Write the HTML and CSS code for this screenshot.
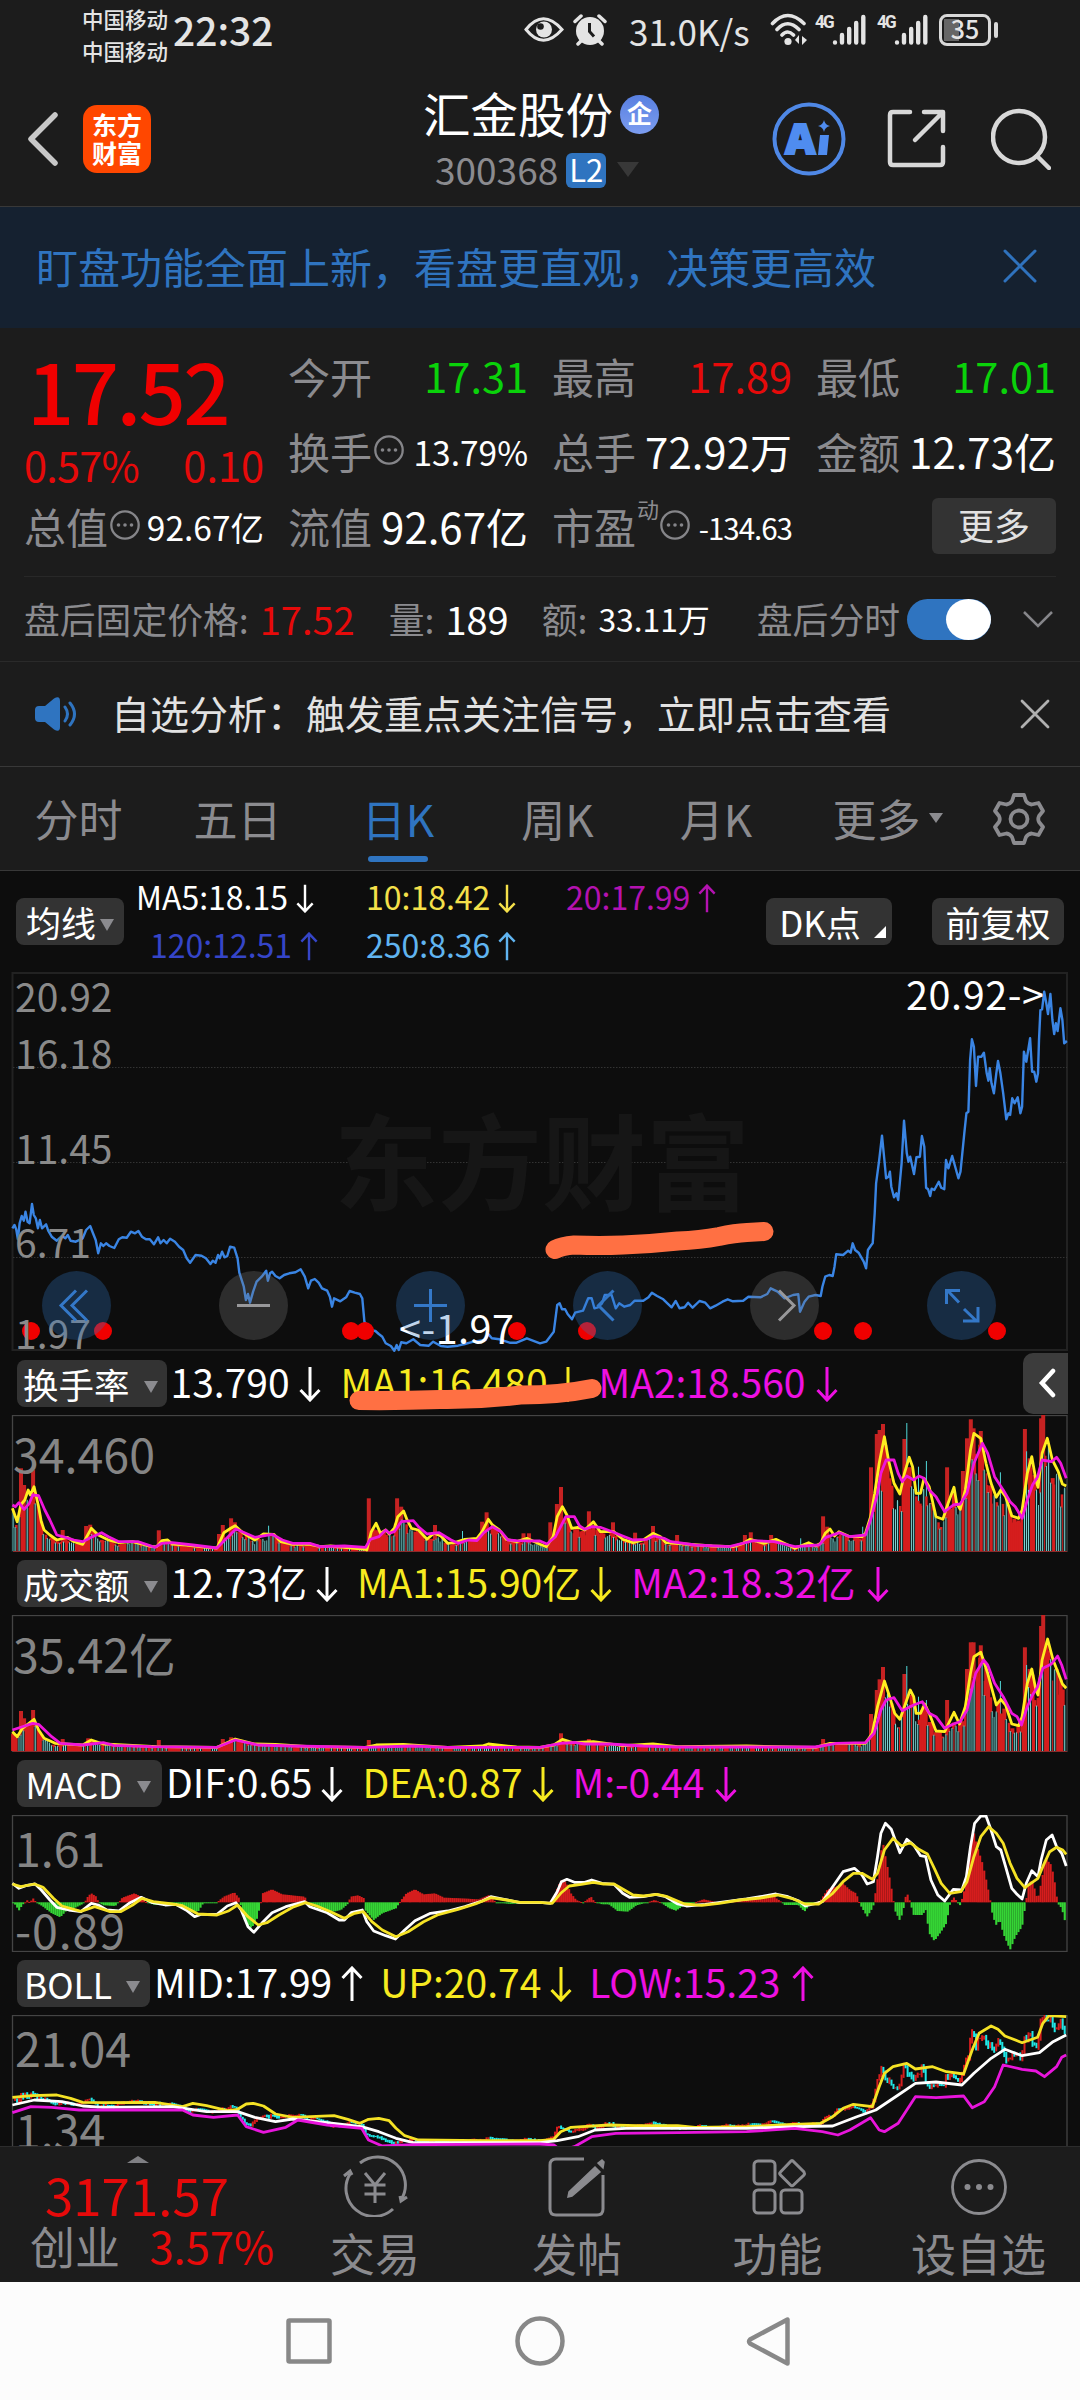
FILE: index.html
```html
<!DOCTYPE html>
<html lang="zh-CN">
<head>
  <meta charset="UTF-8" />
  <title>汇金股份 300368</title>
  <meta name="viewport" content="width=device-width, initial-scale=1.0" />
  <link rel="stylesheet" href="styles.css">
</head>
<body>

<svg width="0" height="0" class="defs">
  <symbol id="down" viewBox="0 0 22 36"><path d="M11 1v32M1.500 24l9.500 10 9.500-10" /></symbol>
  <symbol id="up" viewBox="0 0 22 36"><path d="M11 35V3M1.500 12L11 2l9.500 10" /></symbol>
  <symbol id="info" viewBox="0 0 30 30"><circle cx="15" cy="15" r="13.700" fill="none" stroke="#858589" stroke-width="2.300" /><g fill="#858589"><circle cx="8.500" cy="15" r="1.800" /><circle cx="15" cy="15" r="1.800" /><circle cx="21.500" cy="15" r="1.800" /></g></symbol>
  <symbol id="bars" viewBox="0 0 34 32"><g stroke="#e4e4e4" stroke-width="4.400" stroke-linecap="round"><path d="M3 28.500v.1M10 21v7.500M17.200 15v13.500M24.200 9v19.500M31.300 3v25.500" /></g></symbol>
</svg>

<div class="status">
  <div class="carrier"><span>中国移动</span><span>中国移动</span></div>
  <div class="time">22:32</div>
  <svg class="eye" width="40" height="27" viewBox="0 0 40 27"><path d="M2 13.500Q19 -8 38 13.500Q19 35 2 13.500Z" fill="none" stroke="#e4e4e4" stroke-width="3" /><circle cx="20" cy="13.500" r="8" fill="#e4e4e4" /><circle cx="16.500" cy="10.500" r="3.300" fill="#1c1c1c" /></svg>
  <svg class="alarm" width="34" height="32" viewBox="0 0 34 32"><circle cx="17" cy="17" r="14" fill="#e4e4e4" /><path d="M2 7.500l6-5.500M32 7.500l-6-5.500M5 30l4-4M29 30l-4-4" stroke="#e4e4e4" stroke-width="3.500" stroke-linecap="round" /><path d="M16.500 9v8.500l4.500 5" fill="none" stroke="#1c1c1c" stroke-width="3" /></svg>
  <div class="speed">31.0K/s</div>
  <svg class="wifi" width="38" height="33" viewBox="0 0 38 33"><g fill="none" stroke="#e4e4e4" stroke-width="3.600" stroke-linecap="round"><path d="M2.500 10.500Q17.500 -5.500 34 10.500M7 16.500Q17.500 5 29 16.500M12 22Q17.500 16 23.500 22" /></g><circle cx="18" cy="28.500" r="3.600" fill="#e4e4e4" /><path d="M29 22v9l-4-4zM32 32v-9l5 4z" fill="#e4e4e4" /></svg>
  <div class="net">4G</div><svg class="sig" width="34" height="32"><use href="#bars" /></svg>
  <div class="net second">4G</div><svg class="sig" width="34" height="32"><use href="#bars" /></svg>
  <div class="battery"><span>35</span></div><i class="nub"></i>
</div>

<header class="header">
  <svg class="back" width="32" height="56" viewBox="0 0 32 56"><path d="M28 4L4 28l24 24" fill="none" stroke="#c8c8c8" stroke-width="5.500" stroke-linecap="round" stroke-linejoin="round" /></svg>
  <div class="logo"><span>东方</span><span>财富</span></div>
  <div class="title">
    <div class="name">汇金股份<span class="corp">企</span></div>
    <div class="code">300368<span class="l2">L2</span><i class="tri-big"></i></div>
  </div>
  <svg class="ai" width="74" height="74" viewBox="0 0 74 74"><circle cx="37" cy="37" r="34.500" fill="none" stroke="#4f88e6" stroke-width="4" /><text x="13" y="52" class="ai-text">A</text><path d="M48 33h9l-2 20h-9zM52 18q1 5 6 6q-5 1-6 6q-1-5-6-6q5-1 6-6z" fill="#4f8cf0" /></svg>
  <svg class="share" width="60" height="60" viewBox="0 0 60 60"><path d="M23 3H6Q3 3 3 6V53Q3 56 6 56H53Q56 56 56 53V38M37 3H56V22M55 4L28 31" fill="none" stroke="#d8d8d8" stroke-width="4.500" stroke-linecap="round" stroke-linejoin="round" /></svg>
  <svg class="search" width="60" height="62" viewBox="0 0 60 62"><circle cx="28" cy="29" r="26" fill="none" stroke="#d8d8d8" stroke-width="4.500" /><path d="M46 48l12 12" stroke="#d8d8d8" stroke-width="4.500" stroke-linecap="round" /></svg>
</header>

<div class="banner">
  <span>盯盘功能全面上新，看盘更直观，决策更高效</span>
  <svg width="34" height="34" viewBox="0 0 34 34"><path d="M2 2l30 30M32 2L2 32" stroke="#2f72bd" stroke-width="3" stroke-linecap="round" /></svg>
</div>

<section class="quote">
  <div class="col first">
    <div class="price">17.52</div>
    <div class="change red"><span>0.57%</span><span>0.10</span></div>
    <div class="row"><label>总值</label><svg class="info"><use href="#info" /></svg><b class="s34">92.67亿</b></div>
  </div>
  <div class="col">
    <div class="row"><label>今开</label><b class="green">17.31</b></div>
    <div class="row"><label>换手</label><svg class="info"><use href="#info" /></svg><b class="s34">13.79%</b></div>
    <div class="row"><label>流值</label><b>92.67亿</b></div>
  </div>
  <div class="col">
    <div class="row"><label>最高</label><b class="red">17.89</b></div>
    <div class="row"><label>总手</label><b>72.92万</b></div>
    <div class="row"><label>市盈</label><sup>动</sup><svg class="info"><use href="#info" /></svg><b class="s29">-134.63</b></div>
  </div>
  <div class="col">
    <div class="row"><label>最低</label><b class="green">17.01</b></div>
    <div class="row"><label>金额</label><b>12.73亿</b></div>
    <div class="row"><button class="more">更多</button></div>
  </div>
</section>

<section class="after">
  <label>盘后固定价格:</label><b class="red">17.52</b>
  <label class="vol">量:</label><b class="wide">189</b>
  <label class="amt">额:</label><b class="small">33.11万</b>
  <label class="sw-label">盘后分时</label><span class="switch"><i></i></span>
  <svg width="32" height="18" viewBox="0 0 32 18"><path d="M2 2l14 14L30 2" fill="none" stroke="#86868a" stroke-width="2.500" /></svg>
</section>

<section class="notice">
  <svg width="44" height="36" viewBox="0 0 44 36"><path d="M1 14Q1 10 5 10h6L20 2.500Q26 -1 26 5v26Q26 37 20 33.500L11 26H5Q1 26 1 22z" fill="#2f74c0" /><path d="M31 11q5 7 0 14M36 7q9 11 0 22" fill="none" stroke="#2f74c0" stroke-width="3" stroke-linecap="round" /></svg>
  <span>自选分析：触发重点关注信号，立即点击查看</span>
  <svg class="close" width="30" height="30" viewBox="0 0 30 30"><path d="M2 2l26 26M28 2L2 28" stroke="#b0b0b0" stroke-width="2.800" stroke-linecap="round" /></svg>
</section>

<nav class="tabs">
  <a>分时</a><a>五日</a><a class="active">日K</a><a>周K</a><a>月K</a><a>更多<i class="tri"></i></a>
  <svg class="gear" width="54" height="54" viewBox="0 0 54 54"><g fill="none" stroke="#8b8b8f" stroke-width="3.800" stroke-linejoin="round"><path d="M22 3h10l2 6q2 3 5.500 3.500l7-1.500 4.500 8-4 5q-1.500 3 0 6l4 5-4.500 8-7-1.500Q36 42 34 45l-2 6H22l-2-6q-2-3-5.500-3.500L7.500 43 3 35l4-5q1.500-3 0-6l-4-5 4.500-8 7 1.500Q18 12 20 9z" /><circle cx="27" cy="27" r="8.500" /></g></svg>
</nav>

<div class="avg">
  <button class="pill">均线<i class="tri"></i></button>
  <div class="ma">
    <span class="white">MA5:18.15<svg class="arr"><use href="#down" /></svg></span>
    <span class="lemon">10:18.42<svg class="arr"><use href="#down" /></svg></span>
    <span class="purple">20:17.99<svg class="arr"><use href="#up" /></svg></span>
    <span class="indigo">120:12.51<svg class="arr"><use href="#up" /></svg></span>
    <span class="sky">250:8.36<svg class="arr"><use href="#up" /></svg></span>
  </div>
  <button class="pill dk">DK点</button>
  <button class="pill fq">前复权</button>
</div>

<svg class="chart" id="main" width="1080" height="392">
  <rect x="12.500" y="13" width="1054.500" height="377" fill="none" stroke="#222" stroke-width="2" />
  <path d="M13 107.500H1067M13 202.500H1067M13 297.500H1067" stroke="#333" stroke-dasharray="1.500 1.500" />
  <text class="watermark" x="334" y="243">东方财富</text>
  <g class="series"></g>
  <g fill="#f00000">
    <circle cx="31" cy="371" r="9" /><circle cx="103" cy="371" r="9" /><circle cx="351" cy="371" r="9" /><circle cx="365" cy="371" r="9" /><circle cx="517" cy="371" r="9" />
    <circle cx="587" cy="371" r="9" /><circle cx="823" cy="371" r="9" /><circle cx="863" cy="371" r="9" /><circle cx="997" cy="371" r="9" />
  </g>
  <g class="axis">
    <text x="15" y="52">20.92</text><text x="15" y="109">16.18</text><text x="15" y="204">11.45</text><text x="15" y="298">6.71</text><text x="15" y="389">1.97</text>
  </g>
  <text class="mark" x="399" y="384" textLength="115">&lt;-1.97</text>
  <text class="mark" x="906" y="50" textLength="138">20.92-&gt;</text>
  <g fill="#2f74c0" fill-opacity=".3"><circle cx="76.500" cy="345.500" r="34.500" /><circle cx="430.500" cy="345.500" r="34.500" /><circle cx="607.500" cy="345.500" r="34.500" /><circle cx="961.500" cy="345.500" r="34.500" /></g>
  <g fill="#777" fill-opacity=".3"><circle cx="253.500" cy="345.500" r="34.500" /><circle cx="784.500" cy="345.500" r="34.500" /></g>
  <path d="M76 330.500L61 345.500l15 15M87 330.500L72 345.500l15 15M430.500 329v33M414 345.500h33M613.500 330.500l-15 15 15 15M959 342.500L947 330M946.500 344v-13.500H960M964 349l13 12.500M978 347v14h-15" fill="none" stroke="#3478c8" stroke-width="3" />
  <path d="M237 345.500h33M779 330.500l15 15-15 15" fill="none" stroke="#98989a" stroke-width="3" />
</svg>

<section class="indicator">
  <div class="head"><button class="pill">换手率<i class="tri"></i></button>
    <span class="white">13.790<svg class="arr"><use href="#down" /></svg></span><span class="yellow">MA1:16.480<svg class="arr"><use href="#down" /></svg></span><span class="magenta">MA2:18.560<svg class="arr"><use href="#down" /></svg></span>
    <div class="collapse"><svg width="18" height="30" viewBox="0 0 18 30"><path d="M15 3L4 15l11 12" fill="none" stroke="#fff" stroke-width="4.500" stroke-linecap="round" /></svg></div>
  </div>
  <svg class="chart" id="turnover" width="1080" height="137"><rect class="frame" x="12.500" y=".5" width="1054.500" height="136" /><g class="series"></g><text class="label" x="13" y="57.500">34.460</text></svg>
</section>

<section class="indicator">
  <div class="head tight"><button class="pill">成交额<i class="tri"></i></button>
    <span class="white">12.73亿<svg class="arr"><use href="#down" /></svg></span><span class="yellow">MA1:15.90亿<svg class="arr"><use href="#down" /></svg></span><span class="magenta">MA2:18.32亿<svg class="arr"><use href="#down" /></svg></span>
  </div>
  <svg class="chart" id="amount" width="1080" height="137"><rect class="frame" x="12.500" y=".5" width="1054.500" height="136" /><g class="series"></g><text class="label" x="13" y="57.500">35.42亿</text></svg>
</section>

<section class="indicator">
  <div class="head latin"><button class="pill">MACD<i class="tri"></i></button>
    <span class="white">DIF:0.65<svg class="arr"><use href="#down" /></svg></span><span class="yellow">DEA:0.87<svg class="arr"><use href="#down" /></svg></span><span class="magenta">M:-0.44<svg class="arr"><use href="#down" /></svg></span>
  </div>
  <svg class="chart" id="macd" width="1080" height="137"><rect class="frame" x="12.500" y=".5" width="1054.500" height="136" /><g class="series"></g><text class="label" x="15" y="52">1.61</text><text class="label" x="15" y="133.500" textLength="110">-0.89</text></svg>
</section>

<section class="indicator last">
  <div class="head boll"><button class="pill">BOLL<i class="tri"></i></button>
    <span class="white">MID:17.99<svg class="arr"><use href="#up" /></svg></span><span class="yellow">UP:20.74<svg class="arr"><use href="#down" /></svg></span><span class="magenta">LOW:15.23<svg class="arr"><use href="#up" /></svg></span>
  </div>
  <svg class="chart" id="boll" width="1080" height="137"><rect class="frame" x="12.500" y=".5" width="1054.500" height="136" /><g class="series"></g><text class="label" x="15" y="52">21.04</text><text class="label" x="15" y="134">1.34</text></svg>
</section>

<footer class="toolbar">
  <div class="index">
    <i class="caret"></i>
    <div class="val">3171.57</div>
    <div class="pct"><span>创业</span><em>3.57%</em></div>
  </div>
  <div class="tool">
    <svg width="66" height="62" viewBox="0 0 66 62"><g fill="none" stroke="#8b8b8f" stroke-width="3"><path d="M18 8A28 28 0 0 1 59 45M51 54A28 28 0 0 1 8 19M2 21l6-5 2 4M65 42l-6 4-1-5" /><path d="M23 18l10 12 10-12M33 30v18M22.500 30h21M22.500 39h21" /></g></svg>
    <span>交易</span>
  </div>
  <div class="tool">
    <svg width="66" height="62" viewBox="0 0 66 62"><path d="M40 4H12Q6 4 6 10v44q0 6 6 6h41q6 0 6-6V20" fill="none" stroke="#8b8b8f" stroke-width="3" /><path d="M51 12l5 5L28 41l-4 1 1-5zM54 8l4-3 2 2-1 6z" fill="#8b8b8f" stroke="#8b8b8f" stroke-width="1.500" /></svg>
    <span>发帖</span>
  </div>
  <div class="tool">
    <svg width="66" height="62" viewBox="0 0 66 62"><g fill="none" stroke="#8b8b8f" stroke-width="3"><rect x="9" y="6" width="21" height="23" rx="4" /><rect x="9" y="35" width="21" height="23" rx="4" /><rect x="36" y="35" width="21" height="23" rx="4" /><path d="M45.500 6.500q1.500-2 3 0L59 17q1 1.500 0 3L48.500 30q-1.500 1.500-3 0L35.500 20q-1.500-1.500 0-3z" /></g></svg>
    <span>功能</span>
  </div>
  <div class="tool">
    <svg width="66" height="62" viewBox="0 0 66 62"><circle cx="33" cy="32" r="26.500" fill="none" stroke="#8b8b8f" stroke-width="2.800" /><g fill="#8b8b8f"><circle cx="21.500" cy="32" r="3" /><circle cx="33" cy="32" r="3" /><circle cx="44.500" cy="32" r="3" /></g></svg>
    <span>设自选</span>
  </div>
</footer>

<div class="navbar">
  <svg width="1080" height="118"><g fill="none" stroke="#888" stroke-width="4.500" stroke-linejoin="round"><rect x="288.500" y="38.500" width="41" height="41" rx="1" /><circle cx="540" cy="59" r="22.500" /><path d="M787.500 37.500v44L750 61.500q-2-2 0-4z" /></g></svg>
</div>

<svg class="marker" width="1080" height="200">
  <path d="M555 29.500Q562 26 574 25Q600 26 623 25Q650 24 678 21Q700 20 719 16.500Q735 13 747 12.500L764 11.500" />
  <path d="M359 180.500Q400 181 440 179.500Q480 180 520 175Q560 175 592 168.500" />
</svg>

<script src="charts.js"></script>
</body>
</html>
```

FILE: styles.css
```css
:root {
  --panel: #1c1c1c;
  --chart: #0d0d0d;
  --muted: #8b8b8f;
  --blue: #2f74c0;
  --red: #e60a0a;
}

* {
  box-sizing: border-box;
}

body {
  margin: 0;
  width: 1080px;
  height: 2400px;
  position: relative;
  overflow: hidden;
  background: var(--chart);
  color: #fff;
  font-family: "Noto Sans CJK SC", sans-serif;
  line-height: 1;
}

svg {
  display: block;
  flex: none;
}

.defs {
  position: absolute;
}

button {
  border: none;
  padding: 0;
  font: inherit;
  color: #fff;
}

b {
  font-weight: 400;
}

i {
  display: block;
}

.red { color: var(--red); }
.green { color: #0ad20a; }
.white { color: #fff; }
.yellow { color: #f7ea20; }
.magenta { color: #ee10e2; }
.lemon { color: #f5e04a; }
.purple { color: #b412b0; }
.indigo { color: #3545c8; }
.sky { color: #60b4f0; }

/* status bar */
.status {
  height: 60px;
  display: flex;
  align-items: center;
  padding: 14px 0 0 82px;
  color: #e4e4e4;
  background: var(--panel);
}

.carrier {
  width: 91px;
  font-size: 21.5px;
  font-weight: 500;
}

.carrier span {
  display: block;
  line-height: 32px;
}

.status > * { margin-top: -18px; }
.status .carrier { margin-top: -4px; }

.time {
  width: 351px;
  font-size: 39px;
  font-weight: 500;
}

.status .time { margin-top: -16px; }

.status .eye { margin-top: -15px; }
.status .alarm { margin: -15px 22px 0 9px; }
.status .speed { width: 141px; margin-top: -14px; font-size: 35px; white-space: nowrap; }
.status .wifi { margin-top: -15px; margin-right: 6px; }

.net {
  width: 18px;
  font-family: Roboto, sans-serif;
  font-size: 19px;
  font-weight: 700;
  letter-spacing: -2px;
  transform: translateY(-7px) scaleX(.9);
}

.net.second { margin-left: 10px; }
.status .sig { margin-top: -14px; }

.status .battery {
  width: 52px;
  height: 32px;
  margin: -15px 3px 0 11px;
  border: 3px solid #d8d8d8;
  border-radius: 8px;
  background: linear-gradient(90deg, #666 15px, transparent 15px) 2px 2px / 42px 22px no-repeat;
}

.battery span {
  display: block;
  text-align: center;
  font-size: 25px;
  font-weight: 500;
  line-height: 23px;
}

.status .nub {
  width: 4px;
  height: 16px;
  margin-top: -15px;
  border-radius: 2px;
  background: #d8d8d8;
}

/* header */
.header {
  height: 147px;
  display: flex;
  align-items: center;
  padding: 12px 0 0 27px;
  background: var(--panel);
  border-bottom: 1px solid #383838;
}

.logo {
  width: 68px;
  height: 68px;
  margin-left: 24px;
  padding-top: 5px;
  border-radius: 14px;
  background: #ff4700;
  text-align: center;
  font-size: 25px;
  font-weight: 700;
}

.logo span {
  display: block;
  line-height: 28px;
}

.title {
  width: 620px;
  height: 100px;
  padding-left: 272px;
}

.name {
  display: flex;
  align-items: center;
  font-size: 47.5px;
}

.corp {
  width: 39px;
  height: 39px;
  margin: 4px 0 0 7px;
  border-radius: 50%;
  background: linear-gradient(#587fe0, #7c9df0);
  font-size: 25px;
  font-weight: 700;
  line-height: 35px;
  text-align: center;
}

.code {
  display: flex;
  align-items: center;
  margin-top: 14px;
  padding-left: 12px;
  font-size: 37px;
  color: var(--muted);
}

.l2 {
  width: 40px;
  height: 35px;
  margin: 2px 11px 0 8px;
  border-radius: 6px;
  background: var(--blue);
  color: #fff;
  font-size: 31px;
  line-height: 31px;
  text-align: center;
}

.tri-big {
  border: 11px solid transparent;
  border-top: 15px solid #383838;
  border-bottom: 0;
}

.ai { margin-left: 1px; }
.share { margin-left: 41px; }
.search { margin-left: 44px; }

.ai-text {
  font-family: "Open Sans", sans-serif;
  font-size: 42px;
  font-weight: 800;
  fill: #4f8cf0;
  stroke: #4f8cf0;
  stroke-width: 2px;
}

.banner {
  height: 121px;
  display: flex;
  align-items: center;
  justify-content: space-between;
  padding: 0 43px 0 36px;
  background: #152130;
  color: var(--blue);
  font-size: 42px;
}

.banner span { margin-top: -3px; }

.banner svg { margin-top: -4px; }

/* quote grid */
.quote {
  height: 249px;
  display: grid;
  grid-template-columns: repeat(4, 240px);
  column-gap: 24px;
  padding: 10px 24px 0;
  background: linear-gradient(#282828, #282828) 24px 248px / 1032px 1px no-repeat var(--panel);
}

.row {
  height: 75px;
  display: flex;
  align-items: center;
  white-space: nowrap;
}

.row label {
  font-size: 42px;
  color: var(--muted);
}

.row b {
  margin-left: auto;
  font-size: 42px;
}

.col .green, .col .red { margin-right: 0; font-size: 41.5px; }

.row .s34 {
  font-size: 33.5px;
  padding-top: 2px;
}

.row .s29 {
  font-size: 29.5px;
  padding-top: 4px;
  letter-spacing: -1px;
}

.info {
  width: 30px;
  height: 30px;
  margin: -1px 0 0 2px;
}

.row sup {
  align-self: flex-start;
  margin: 9px -1px 0 1px;
  font-size: 22px;
  color: var(--muted);
}

.price {
  height: 102px;
  padding-left: 3px;
  color: #f00000;
  font-size: 83px;
  font-weight: 500;
  line-height: 102px;
  letter-spacing: -2.6px;
}

.change {
  height: 48px;
  display: flex;
  justify-content: space-between;
  font-size: 41.5px;
  line-height: 48px;
}

.col .change { margin-right: 0; }
.change span:first-child { letter-spacing: -.8px; }

.more {
  width: 124px;
  height: 56px;
  margin-left: auto;
  padding-bottom: 4px;
  border-radius: 6px;
  background: #333;
  color: #e2e2e2;
  font-size: 36px;
}

.after {
  height: 84px;
  display: flex;
  align-items: center;
  padding: 0 26px 0 24px;
  background: var(--panel);
  font-size: 35.8px;
}

.after label { color: var(--muted); }
.after b { font-size: 38px; margin-left: 11px; }
.after .vol { margin-left: 34px; }
.after .amt { margin-left: 33px; }
.after .small { font-size: 31.8px; }
.after .sw-label { margin-left: auto; }
.after svg { margin-left: 31px; }

.switch {
  width: 84px;
  height: 41px;
  margin-left: 7px;
  border-radius: 21px;
  background: var(--blue);
}

.switch i {
  width: 45px;
  height: 41px;
  margin-left: 39px;
  border-radius: 50%;
  background: #fff;
}

.notice {
  height: 106px;
  display: flex;
  align-items: center;
  padding: 0 30px 0 34px;
  background: var(--panel);
  border-top: 1px solid #2a2a2a;
  border-bottom: 1px solid #383838;
  color: #e2e2e2;
  font-size: 39px;
}

.notice span { margin: -4px 0 0 33px; }
.notice .close { margin-left: auto; }

/* period tabs */
.tabs {
  height: 104px;
  display: grid;
  grid-template-columns: 157px 161px 160px 159px 158px 171px 54px;
  align-items: center;
  text-align: center;
  background: var(--panel);
  border-bottom: 1px solid #383838;
  color: var(--muted);
  font-size: 44px;
}

.tabs a {
  height: 103px;
  display: flex;
  align-items: center;
  justify-content: center;
  padding-bottom: 2px;
}

.tabs .active {
  position: relative;
  color: var(--blue);
}

.tabs .active::after {
  content: "";
  position: absolute;
  left: 50px;
  bottom: 8px;
  width: 60px;
  height: 6px;
  border-radius: 3px;
  background: var(--blue);
}

.tabs a:last-of-type { padding-left: 14px; }
.gear { margin-left: 26px; }

.tri {
  display: inline-block;
  border: 7px solid transparent;
  border-top: 12px solid var(--muted);
  border-bottom: 0;
}

.tabs .tri { margin-left: 8px; border-top-width: 10px; }

/* moving average legend */
.avg {
  height: 89px;
  display: flex;
  align-items: flex-start;
  padding: 0 16px;
}

.pill {
  height: 47px;
  border-radius: 8px;
  background: #333;
  font-size: 35px;
  line-height: 38px;
  white-space: nowrap;
}

.avg .pill {
  width: 108px;
  margin-top: 27px;
}

.avg .pill .tri { margin: 0 0 6px 4px; }

.ma {
  width: 642px;
  display: grid;
  grid-template-columns: 230px 200px 200px;
  grid-auto-rows: 48px;
  padding: 1px 0 0 12px;
  font-size: 32px;
}

.ma span {
  display: flex;
  align-items: center;
}

.ma .indigo { padding-left: 14px; }

.arr {
  width: 22px;
  height: 36px;
  margin: 4px 0 0 9px;
  fill: none;
  stroke: currentColor;
  stroke-width: 3;
}

.ma .arr {
  width: 18px;
  height: 29px;
  margin-left: 8px;
}

.avg .dk {
  position: relative;
  width: 126px;
  padding-right: 18px;
}

.dk::after {
  content: "";
  position: absolute;
  right: 6px;
  bottom: 7px;
  border-left: 12px solid transparent;
  border-bottom: 12px solid #fff;
}

.avg .fq {
  width: 132px;
  margin-left: 40px;
}

/* charts */
.chart text {
  font-family: "Noto Sans CJK SC", sans-serif;
}

.axis text {
  font-size: 39px;
  fill: #8a8a8a;
}

.mark {
  font-size: 39.5px;
  fill: #fff;
}

.label {
  font-size: 46.5px;
  fill: #858585;
}

.chart .watermark {
  font-size: 104px;
  font-weight: 700;
  fill: #161616;
}

.frame {
  fill: none;
  stroke: #444;
  stroke-width: 1.3;
}

.series polyline {
  fill: none;
  stroke-width: 2.8;
  stroke-linejoin: round;
}

#main .series polyline {
  stroke-width: 2.4;
}

.indicator {
  height: 200px;
}

.indicator.last {
  height: 194px;
  overflow: hidden;
}

.head {
  position: relative;
  height: 63px;
  display: flex;
  align-items: center;
  padding-left: 17px;
  font-size: 39px;
}

.head .pill {
  margin-right: 4px;
  padding: 0 9px 0 6px;
  font-size: 35.5px;
}

.latin .pill { width: 145px; }
.boll .pill { width: 133px; }

.head .tri { margin: 0 0 6px 14px; }

.head span {
  height: 100%;
  display: flex;
  align-items: center;
  margin: -4px 20px 0 0;
  white-space: nowrap;
}

.tight span, .latin span { margin-right: 19px; }
.boll span { margin-right: 17px; }
.head .magenta .arr { margin-left: 11px; }

.collapse {
  position: absolute;
  top: 1px;
  right: 12px;
  width: 45px;
  height: 61px;
  padding: 15px 0 0 15px;
  border-radius: 10px 0 0 10px;
  background: #3c3c3c;
}

/* bottom toolbar */
.toolbar {
  height: 136px;
  display: grid;
  grid-template-columns: 274px 202px 202px 199px 203px;
  background: var(--panel);
  border-top: 1px solid #2c2c2c;
  color: var(--muted);
  font-size: 45px;
}

.caret {
  margin: 9px 0 0 127px;
  width: 0;
  border: 11px solid transparent;
  border-bottom: 7px solid #808084;
  border-top: 0;
}

.val {
  margin: 6px 0 0 45px;
  color: var(--red);
  font-size: 51px;
}

.pct {
  display: flex;
  align-items: center;
  justify-content: space-between;
  margin: 3px 0 0 30px;
}

.pct em {
  font-style: normal;
  font-size: 43.5px;
  color: var(--red);
}

.tool {
  display: flex;
  flex-direction: column;
  align-items: center;
  padding-top: 8px;
}

.tool span {
  margin-top: 13px;
}

.navbar {
  height: 118px;
  background: #fcfcfc;
}

/* highlighter strokes over the charts */
.marker {
  position: absolute;
  top: 1220px;
  left: 0;
  pointer-events: none;
  fill: none;
  stroke: #ff7043;
  stroke-width: 19;
  stroke-linecap: round;
  stroke-linejoin: round;
}
```

FILE: charts.js
```javascript
// Series are stored on a fine grid (3136 units wide, 3 units per pixel high)
// in two halves; the second half starts at x = 1568.
const KX = 1080 / 3136;
const KY = 1 / 3;
const HALF = 1568;

function parse(left, right) {
  const read = (s, dx) => s.trim().split(/\s+/).map(p => {
    const [x, y] = p.split(",").map(Number);
    return [x + dx, y];
  });
  return read(left, 0).concat(read(right, HALF));
}

function line(points, color, top) {
  const d = points.map(([x, y]) => (x * KX).toFixed(1) + "," + ((y - top) * KY).toFixed(1)).join(" ");
  return `<polyline points="${d}" stroke="${color}" />`;
}

function at(points, x) {
  for (let i = 1; i < points.length; i++) {
    const [x0, y0] = points[i - 1];
    const [x1, y1] = points[i];
    if (x <= x1) return x1 === x0 ? y1 : y0 + (y1 - y0) * (x - x0) / (x1 - x0);
  }
  return points[points.length - 1][1];
}

function rect(x, y, w, h, color) {
  return `<rect x="${x.toFixed(1)}" y="${y.toFixed(1)}" width="${w}" height="${Math.max(h, 1).toFixed(1)}" fill="${color}" />`;
}

let seed = 7;
function rnd() {
  seed = (seed * 16807) % 2147483647;
  return seed / 2147483647;
}

function draw(id, html) {
  document.querySelector("#" + id + " .series").innerHTML = html;
}

const price = parse(
  `36,805 42,795 47,808 52,838 57,790 63,768 69,782 74,755 80,785 86,790 93,732 98,765 104,775 110,805 116,780 122,805 134,793 140,812 150,830 165,842 180,828 190,835 197,825 205,842 220,845 240,835 250,810 262,798 270,820 278,840 285,880 293,850 300,858 308,850 318,858 332,864 345,838 355,832 368,833 380,815 392,820 402,813 412,830 424,838 435,838 447,853 459,832 466,850 475,840 484,850 494,836 508,845 520,860 532,870 542,895 552,908 568,885 585,887 598,895 611,912 618,902 626,908 633,885 638,895 645,875 652,892 660,888 668,860 680,863 690,895 695,938 708,980 714,1020 720,1002 726,1028 735,995 745,965 760,950 773,932 778,962 784,940 790,935 800,948 812,955 825,945 840,940 858,937 873,928 885,950 895,985 903,962 914,957 925,968 935,985 950,992 958,1010 964,1040 970,1015 988,1024 1005,1012 1015,993 1030,998 1045,1002 1052,1015 1058,1085 1075,1110 1090,1113 1100,1122 1110,1130 1120,1150 1135,1158 1145,1172 1152,1155 1158,1170 1165,1147 1180,1150 1200,1138 1220,1155 1245,1157 1258,1145 1280,1158 1300,1160 1330,1157 1350,1152 1375,1145 1410,1140 1418,1122 1428,1135 1450,1138 1480,1148 1500,1148 1530,1135`,
  `0,1150 18,1145 40,1115 50,1035 57,1030 64,1048 73,1048 80,1062 93,1078 102,1058 125,1052 140,1015 150,1015 158,1045 168,1042 180,1030 188,1005 208,1005 220,1045 230,1030 245,1040 262,1035 275,1022 300,1022 315,1012 325,998 340,1008 358,1018 370,1030 382,1042 394,1023 405,1045 420,1042 430,1028 443,1043 463,1023 480,1028 494,1045 510,1037 530,1025 545,1018 560,1024 590,1022 605,1010 640,1012 660,1002 670,985 690,995 710,1015 735,1005 750,1003 755,1055 768,1025 780,1010 800,1005 815,1008 820,980 828,950 840,945 850,948 855,920 860,883 880,885 895,872 902,878 908,850 915,870 925,878 940,905 947,925 952,870 962,855 966,850 972,760 976,670 985,600 993,527 1000,600 1005,655 1012,650 1016,635 1020,680 1028,712 1035,700 1040,720 1050,610 1057,482 1065,580 1070,605 1075,590 1086,642 1093,592 1103,590 1109,528 1116,560 1121,683 1127,688 1133,708 1137,686 1145,690 1158,665 1165,683 1174,688 1179,600 1186,625 1197,588 1215,655 1221,635 1232,520 1238,460 1244,455 1249,300 1254,238 1260,260 1266,378 1272,290 1282,290 1289,278 1297,340 1302,362 1306,325 1311,370 1318,400 1325,340 1330,303 1337,340 1345,400 1354,478 1360,460 1365,465 1371,415 1378,430 1387,412 1395,460 1400,440 1405,275 1412,305 1423,235 1429,335 1435,335 1441,365 1446,340 1449,240 1453,150 1458,148 1464,95 1470,130 1475,162 1482,102 1488,180 1493,222 1498,190 1503,213 1511,145 1517,180 1522,250 1530,243`
);
draw("main", line(price, "#3a85e4", 0));

// Volume style panels: bars under two moving averages.
function volume(id, ma1, ma2, peaks) {
  const top = 195;
  const base = 603;
  let red = "";
  let cyan = "";
  for (let x = 38; x < 3096; x += 5.85) {
    const h = base - at(ma1, x);
    const up = rnd() > 0.48;
    const y = base - h * (up ? 0.72 + rnd() * 0.3 : 0.6 + rnd() * 0.4);
    if (up) red += rect(x * KX - 2, (y - top) * KY, 4, (base - y) * KY, "#d51d1d");
    else {
      cyan += rect(x * KX - 1.5, (y - top) * KY + 1, 3, (base - y) * KY, "#0c2828");
      cyan += rect(x * KX - 0.5, (y - top) * KY, 1, (base - y) * KY, "#7fcfcf");
    }
  }
  let spikes = "";
  peaks.forEach(([x, y, c]) => {
    const w = c ? 1 : 4;
    spikes += rect(x * KX - w / 2, (y - top) * KY, w, (base - y) * KY, c ? "#50d8d8" : "#c62222");
  });
  draw(id, spikes + red + cyan + rect(13, 136, 1054, 1, "#8a2c2c") + line(ma1, "#ffee20", top) + line(ma2, "#f015dc", top));
}

const R = HALF;
volume("turnover",
  parse(
    `36,475 50,515 60,465 72,450 82,420 88,435 99,410 112,470 120,515 128,540 145,555 165,570 195,562 215,575 240,583 252,560 265,535 285,555 315,570 345,578 385,575 440,590 455,590 470,572 487,570 500,582 540,585 600,592 630,594 650,548 670,535 683,527 705,548 740,570 765,552 795,553 815,575 850,583 900,583 930,590 960,588 1060,598 1065,600 1078,545 1092,520 1105,550 1120,540 1130,552 1145,535 1155,500 1172,483 1182,510 1195,535 1215,540 1240,568 1260,550 1280,558 1300,580 1320,578 1350,568 1385,565 1400,545 1418,508 1430,525 1450,540 1470,568 1500,575 1530,565`,
    `0,583 18,590 38,560 50,500 65,470 78,495 92,535 110,532 130,540 155,515 175,545 215,545 240,568 270,578 300,570 328,550 350,560 365,578 420,582 500,588 560,590 590,580 610,568 650,580 685,568 740,595 780,578 800,588 815,580 828,550 842,537 855,558 868,545 900,560 935,560 945,550 960,500 972,430 985,340 1000,260 1012,330 1028,400 1045,432 1058,370 1072,322 1082,350 1092,430 1105,430 1115,385 1130,410 1150,500 1170,508 1185,460 1202,412 1210,460 1220,478 1235,420 1250,300 1260,250 1280,265 1295,340 1310,400 1325,442 1338,420 1352,440 1370,498 1390,505 1400,480 1415,370 1428,320 1440,390 1446,412 1458,310 1473,265 1488,330 1505,365 1517,402 1528,408`
  ),
  parse(
    `36,465 45,470 55,458 70,478 85,460 95,435 112,437 130,480 145,510 165,555 190,562 215,570 240,575 265,562 295,548 315,560 345,575 400,575 450,592 470,580 500,578 560,585 630,594 655,568 685,537 710,548 740,562 790,553 820,570 850,580 900,580 930,590 1000,588 1062,592 1075,568 1100,560 1120,540 1130,550 1145,545 1165,515 1200,512 1215,530 1240,552 1275,548 1310,570 1330,580 1360,570 1385,572 1405,548 1430,530 1455,545 1475,570 1500,572`,
    `0,573 20,582 45,560 75,500 100,500 115,528 130,538 150,530 175,532 210,545 240,558 270,570 310,568 330,558 360,565 380,575 450,585 550,590 620,572 680,575 740,590 810,585 830,562 870,548 900,560 945,555 960,510 980,430 990,370 1005,330 1028,330 1040,370 1052,395 1065,378 1085,390 1100,378 1115,385 1130,420 1150,440 1175,485 1200,465 1220,462 1240,430 1260,340 1285,280 1300,310 1320,380 1345,420 1365,455 1380,470 1400,505 1415,450 1430,405 1445,380 1458,330 1485,335 1500,322 1512,340 1528,385`
  ),
  [
    [61, 355], [70, 405], [96, 360], [182, 540], [250, 528], [262, 524], [461, 541], [636, 552], [647, 525], [671, 505], [682, 517], [780, 527, 1],
    [1071, 445], [1153, 445], [1165, 470], [1263, 525], [1343, 543, 1], [1400, 515], [1413, 487], [1520, 550], [1536, 550],
    [R + 30, 517], [R + 49, 462], [R + 61, 411], [R + 142, 484], [R + 212, 517], [R + 276, 548], [R + 328, 528], [R + 398, 555], [R + 595, 555],
    [R + 612, 547], [R + 671, 555], [R + 757, 565, 1], [R + 822, 499], [R + 834, 530], [R + 937, 530, 1], [R + 961, 352], [R + 978, 252], [R + 986, 240],
    [R + 996, 222], [R + 1058, 267], [R + 1065, 219, 1], [R + 1099, 350, 1], [R + 1122, 333, 1], [R + 1182, 352], [R + 1228, 363], [R + 1240, 265],
    [R + 1251, 208], [R + 1259, 235], [R + 1280, 243], [R + 1293, 370], [R + 1337, 367, 1], [R + 1408, 237], [R + 1413, 304, 1], [R + 1422, 325], [R + 1455, 205], [R + 1461, 195]
  ]
);

volume("amount",
  parse(
    `36,545 50,560 65,535 99,508 112,540 128,565 160,580 240,585 265,570 300,582 455,590 630,592 683,567 740,582 800,583 900,590 1060,592 1092,585 1172,583 1300,592 1400,588 1418,582 1500,591`,
    `0,592 40,585 65,568 95,578 155,575 240,587 328,582 400,590 600,588 800,592 842,580 945,580 965,550 980,470 1000,393 1012,430 1030,490 1045,508 1058,470 1075,420 1085,440 1092,490 1105,490 1117,462 1130,490 1150,543 1175,545 1202,487 1218,522 1235,470 1250,370 1260,320 1280,307 1300,370 1325,465 1338,448 1352,465 1370,522 1390,527 1400,500 1415,400 1428,357 1440,420 1446,435 1458,330 1474,267 1490,330 1505,370 1517,402 1528,415`
  ),
  parse(
    `36,540 95,520 112,523 150,560 175,580 240,585 300,578 330,586 440,590 630,592 683,570 750,585 850,588 1060,592 1200,588 1300,592 1560,592`,
    `0,592 60,580 100,577 130,582 200,582 300,588 400,591 800,591 860,580 945,578 970,550 990,480 1005,450 1028,443 1052,482 1085,465 1110,455 1130,490 1150,500 1175,535 1200,522 1220,515 1240,480 1265,370 1288,330 1300,345 1320,400 1345,440 1370,490 1385,500 1398,525 1415,470 1430,435 1445,410 1460,355 1485,342 1503,318 1515,345 1528,388`
  ),
  [
    [61, 483], [70, 505], [96, 480], [182, 567], [256, 565], [461, 570], [647, 567], [671, 562], [1071, 570], [R + 61, 550], [R + 142, 567], [R + 822, 567],
    [R + 961, 492], [R + 978, 420], [R + 986, 388], [R + 996, 351], [R + 1058, 372], [R + 1065, 348, 1], [R + 1099, 440, 1], [R + 1122, 450, 1],
    [R + 1182, 450], [R + 1240, 357], [R + 1251, 277], [R + 1259, 277], [R + 1280, 286], [R + 1293, 393], [R + 1337, 393, 1], [R + 1408, 292],
    [R + 1413, 345, 1], [R + 1422, 357], [R + 1455, 228], [R + 1461, 195]
  ]
);

// MACD histogram around the zero line
const hist = parse(
  `36,457 45,465 55,482 65,465 75,455 80,450 86,457 97,445 105,457 125,470 150,490 175,502 190,485 215,475 240,462 247,455 256,438 265,430 280,440 286,457 300,466 335,468 345,457 355,443 390,430 410,440 425,457 450,465 500,462 530,468 550,485 575,485 590,460 630,457 650,440 680,427 695,445 700,470 710,510 730,535 745,510 757,460 762,430 790,418 820,433 885,440 893,457 920,475 970,485 990,480 1010,462 1018,440 1040,436 1058,445 1060,480 1085,510 1110,490 1150,475 1165,450 1180,430 1205,418 1230,433 1263,430 1290,443 1340,445 1390,448 1420,435 1440,457 1480,462`,
  `0,457 20,460 40,445 50,415 60,392 75,395 90,430 105,450 125,458 148,440 158,455 180,463 200,463 225,483 255,485 280,466 310,458 332,450 350,457 375,475 395,482 420,465 450,457 475,448 520,458 560,450 620,447 680,440 700,455 710,465 750,465 768,485 780,468 800,460 815,450 835,418 855,412 880,400 900,420 918,430 925,450 930,465 950,500 965,475 970,460 975,420 985,350 995,272 1005,330 1018,400 1026,450 1030,480 1045,512 1055,480 1058,455 1065,427 1073,450 1085,495 1110,495 1120,480 1130,550 1145,573 1165,545 1180,520 1190,465 1200,440 1220,466 1230,430 1240,380 1250,300 1258,240 1270,290 1285,340 1298,400 1308,455 1315,500 1325,525 1335,510 1345,550 1365,600 1380,560 1400,530 1410,460 1418,410 1428,385 1445,450 1455,400 1468,325 1485,345 1495,400 1503,460 1515,475 1528,528`
);
let bars = "";
for (let x = 38; x < 3096; x += 5.85) {
  const v = at(hist, x);
  if (v < 457) bars += rect(x * KX - 1, (v - 195) * KY, 2.1, (457 - v) * KY, "#d51d1d");
  else bars += rect(x * KX - 1, (457 - 195) * KY, 2.1, (v - 457) * KY, "#35d435");
}
draw("macd", bars +
  line(parse(
    `36,400 55,415 75,407 102,402 120,420 145,450 165,472 200,480 235,485 265,460 285,465 310,480 345,483 375,460 410,442 440,457 480,465 510,463 540,480 565,500 585,493 630,493 660,468 685,458 700,480 720,530 737,547 760,520 790,488 830,470 885,455 900,470 950,488 985,510 1000,510 1020,488 1052,480 1065,515 1085,543 1120,557 1148,567 1175,540 1205,512 1250,490 1300,483 1350,470 1400,453 1425,440 1460,447 1510,458`,
    `0,457 30,460 50,425 62,395 78,388 100,397 130,397 150,390 180,400 215,403 240,430 260,442 300,440 335,433 365,440 400,462 425,468 480,463 540,455 600,447 640,440 685,432 720,440 750,452 770,468 795,462 820,455 850,410 880,365 913,355 935,375 950,402 968,395 980,320 990,250 1003,220 1020,238 1045,308 1065,268 1085,285 1105,317 1120,320 1135,390 1155,435 1175,453 1200,418 1225,420 1238,380 1250,290 1262,220 1280,198 1295,198 1310,240 1325,290 1338,300 1352,350 1370,415 1385,433 1400,447 1412,400 1428,362 1446,380 1455,330 1470,270 1487,255 1500,290 1515,310 1528,348`
  ), "#fff", 195) +
  line(parse(
    `36,402 60,410 100,402 125,412 155,445 180,468 235,484 275,470 320,485 350,485 385,465 412,445 445,455 500,462 530,467 575,492 630,495 665,482 690,465 720,500 750,525 775,518 810,495 850,472 887,458 920,468 960,485 1000,505 1030,490 1055,485 1080,515 1110,540 1150,560 1185,545 1230,515 1270,495 1330,478 1380,462 1425,443 1470,450 1510,457`,
    `0,457 35,460 60,430 85,408 120,403 155,397 185,402 215,402 245,420 270,435 300,438 340,433 370,440 420,462 470,466 520,460 580,450 640,444 690,435 730,445 770,462 810,462 850,430 880,395 910,370 935,370 965,388 980,370 1000,300 1025,265 1050,288 1075,278 1100,298 1125,312 1145,355 1165,400 1190,430 1222,425 1240,395 1260,320 1280,260 1303,230 1325,250 1345,280 1365,340 1385,385 1408,413 1425,400 1446,385 1460,350 1480,305 1500,292 1518,300 1528,313`
  ), "#f5e225", 195)
);

// BOLL: candles scaled down from the price line, with the three bands
let candles = "";
let prev = null;
for (let x = 38; x < 3096; x += 5.85) {
  const y = 161 + 0.358 * at(price, x);
  if (prev !== null) {
    const up = y === prev ? rnd() > 0.5 : y < prev;
    const pad = 1 + rnd() * (x > R + 960 || x < 110 ? 9 : 4);
    const from = Math.min(y, prev) - pad;
    candles += rect(x * KX - 1, (from - 195) * KY, 2, (Math.abs(y - prev) + pad * 2) * KY, up ? "#d51d1d" : "#20e8e8");
  }
  prev = y;
}
draw("boll",
  candles +
  line(parse(
    `36,442 90,437 165,435 205,445 240,457 300,458 450,457 530,470 560,460 600,467 660,482 690,478 715,462 735,460 765,468 800,492 850,502 970,497 1010,508 1045,520 1070,508 1100,505 1130,512 1150,535 1175,557 1215,570 1400,572`,
    `0,572 40,568 60,545 90,532 200,525 280,527 400,527 450,532 600,530 700,525 815,520 850,500 880,475 910,463 965,470 985,410 1000,370 1025,350 1065,340 1090,357 1140,350 1180,365 1230,372 1255,300 1275,250 1310,228 1330,238 1350,258 1400,278 1445,262 1460,220 1478,197 1528,200`
  ), "#f5e225", 195) +
  line(parse(
    `36,465 100,450 180,455 240,468 300,472 500,470 600,485 690,485 740,502 800,515 850,507 950,518 1050,530 1100,545 1150,565 1200,578`,
    `0,578 50,572 110,560 160,540 250,535 600,535 750,530 850,528 920,500 975,480 1040,435 1090,400 1150,396 1225,405 1260,370 1310,325 1350,298 1400,317 1450,308 1490,275 1528,255`
  ), "#fff", 195) +
  line(parse(
    `36,488 90,470 150,472 230,480 530,480 560,495 620,502 690,495 715,530 765,547 830,532 865,510 950,525 1050,535 1070,570 1110,588 1200,584`,
    `0,582 40,585 60,600 100,590 150,560 220,550 400,548 600,545 740,535 820,545 865,555 900,540 960,503 985,540 1000,545 1040,520 1090,440 1150,443 1230,438 1255,473 1290,455 1320,410 1345,345 1400,358 1440,363 1465,380 1500,350 1515,322 1528,315`
  ), "#e815dc", 195)
);
```
